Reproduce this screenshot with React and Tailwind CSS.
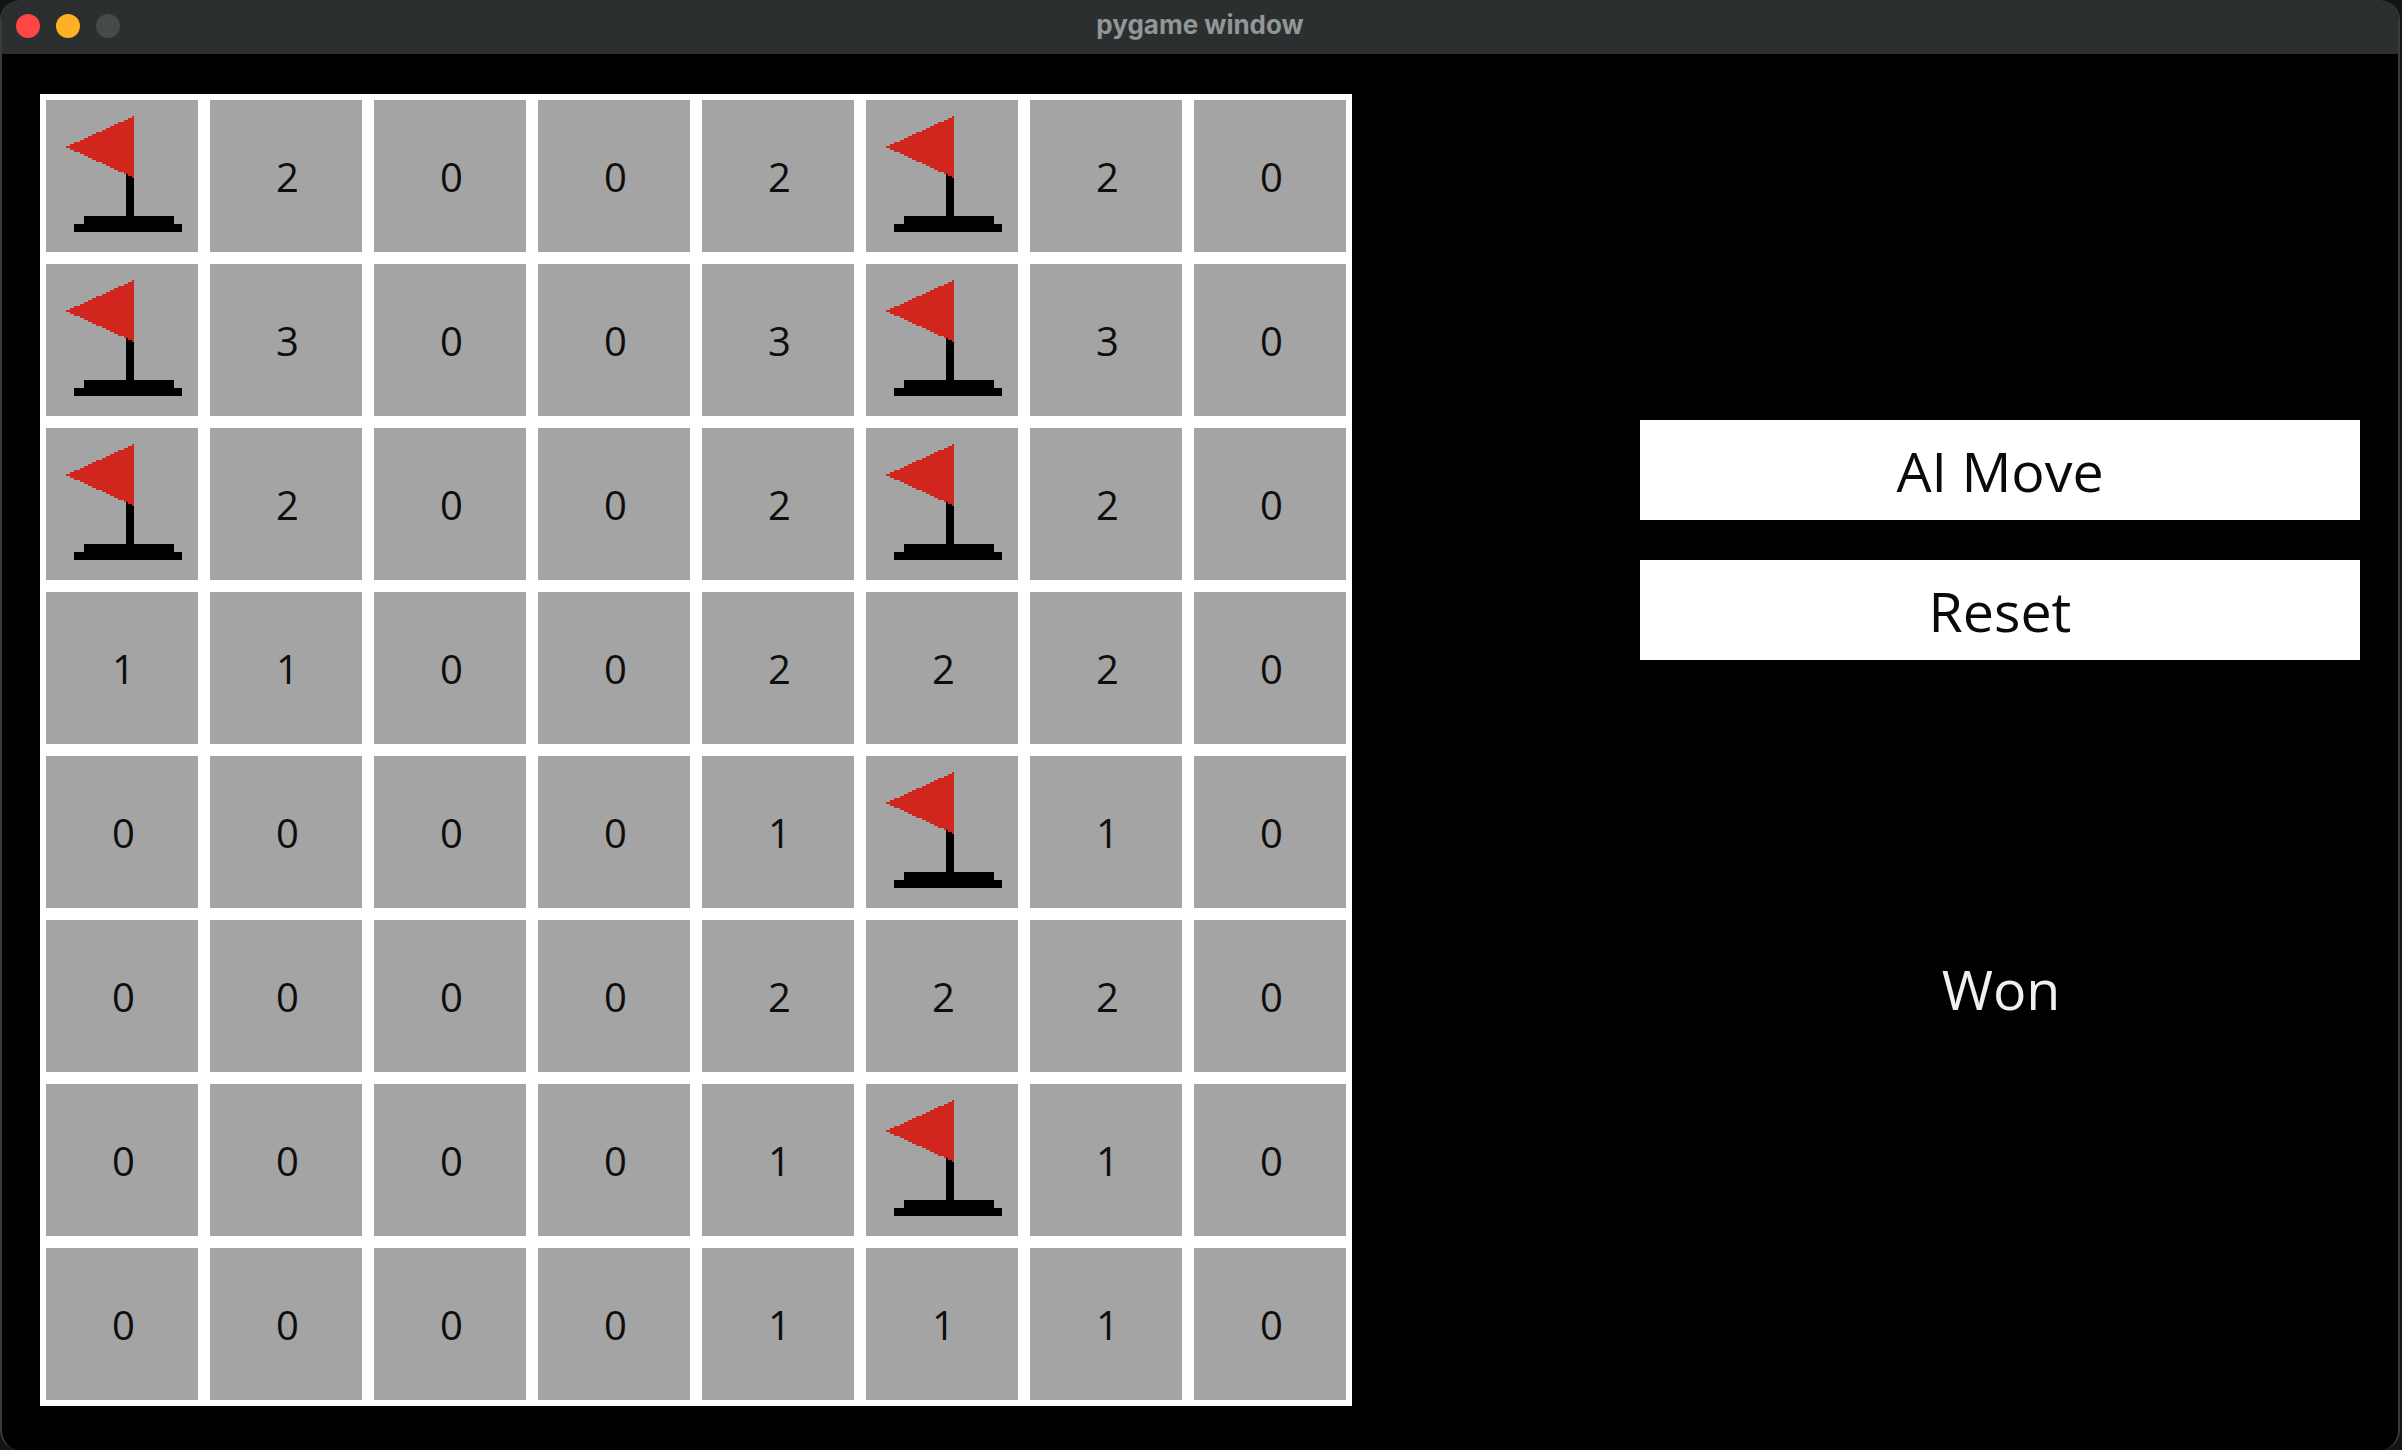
const F = "F";
const board = [
  [F, 2, 0, 0, 2, F, 2, 0],
  [F, 3, 0, 0, 3, F, 3, 0],
  [F, 2, 0, 0, 2, F, 2, 0],
  [1, 1, 0, 0, 2, 2, 2, 0],
  [0, 0, 0, 0, 1, F, 1, 0],
  [0, 0, 0, 0, 2, 2, 2, 0],
  [0, 0, 0, 0, 1, F, 1, 0],
  [0, 0, 0, 0, 1, 1, 1, 0],
];

// Pixelated pennant: 31 rows, each two units tall, widest in the middle.
const pennant = Array.from({ length: 31 }, (_, i) => {
  const width = 2 * Math.round((i <= 15 ? (i + 0.5) / 15.5 : (30.5 - i) / 15.5) * 34);
  return `M${88 - width} ${16 + i * 2}h${width}v2h-${width}z`;
}).join("");

function Flag() {
  return (
    <svg viewBox="0 0 152 152" className="size-[152px]" aria-label="Flag">
      <path d="M80 74h8v42h40v8h8v8H28v-8h10v-8h42z" fill="#000" />
      <path d={pennant} fill="#d0261e" />
    </svg>
  );
}

function Cell({ value }) {
  return value === F ? (
    <div className="size-[152px] bg-[#a4a4a4]">
      <Flag />
    </div>
  ) : (
    <div className="flex size-[152px] items-center justify-center bg-[#a4a4a4] pt-[2px] pl-[3px] text-[40px] leading-[54px] text-[#0e0e0e]">
      <span>{value}</span>
    </div>
  );
}

function ActionButton({ children }) {
  return (
    <button className="flex h-[100px] w-full items-center justify-center bg-white pt-px text-[55.5px] leading-[76px] text-[#0a0a0a]">
      <span>{children}</span>
    </button>
  );
}

export default function App() {
  return (
    <div className="h-[1450px] w-[2402px] bg-[#141414]">
      <div className="flex h-[1450px] w-[2400px] flex-col overflow-hidden rounded-[20px] border-x-2 border-[#3a3a3a] bg-black font-['Open_Sans',sans-serif]">
        <header className="grid h-[54px] shrink-0 grid-cols-[1fr_auto_1fr] bg-[#2b2f30]">
          <div className="flex gap-4 pt-3.5 pl-3.5">
            <span className="size-6 rounded-full bg-[#fe4745]" />
            <span className="size-6 rounded-full bg-[#ffb024]" />
            <span className="size-6 rounded-full bg-[#474a4b]" />
          </div>
          <h1 className="pt-[9px] font-['Inter',sans-serif] text-[26px] leading-8 font-bold text-[#929697]">pygame window</h1>
        </header>
        <main className="flex flex-1 px-[38px] pt-10">
          <section className="grid size-[1312px] shrink-0 grid-cols-8 gap-3 bg-white p-1.5">
            {board.flat().map((value, i) => (
              <Cell key={i} value={value} />
            ))}
          </section>
          <aside className="ml-auto flex w-[720px] flex-col gap-10 pt-[326px]">
            <ActionButton>AI Move</ActionButton>
            <ActionButton>Reset</ActionButton>
            <p className="mt-[251px] pl-0.5 text-center text-[55.5px] leading-[76px] text-[#f0f0f0]">Won</p>
          </aside>
        </main>
      </div>
    </div>
  );
}
